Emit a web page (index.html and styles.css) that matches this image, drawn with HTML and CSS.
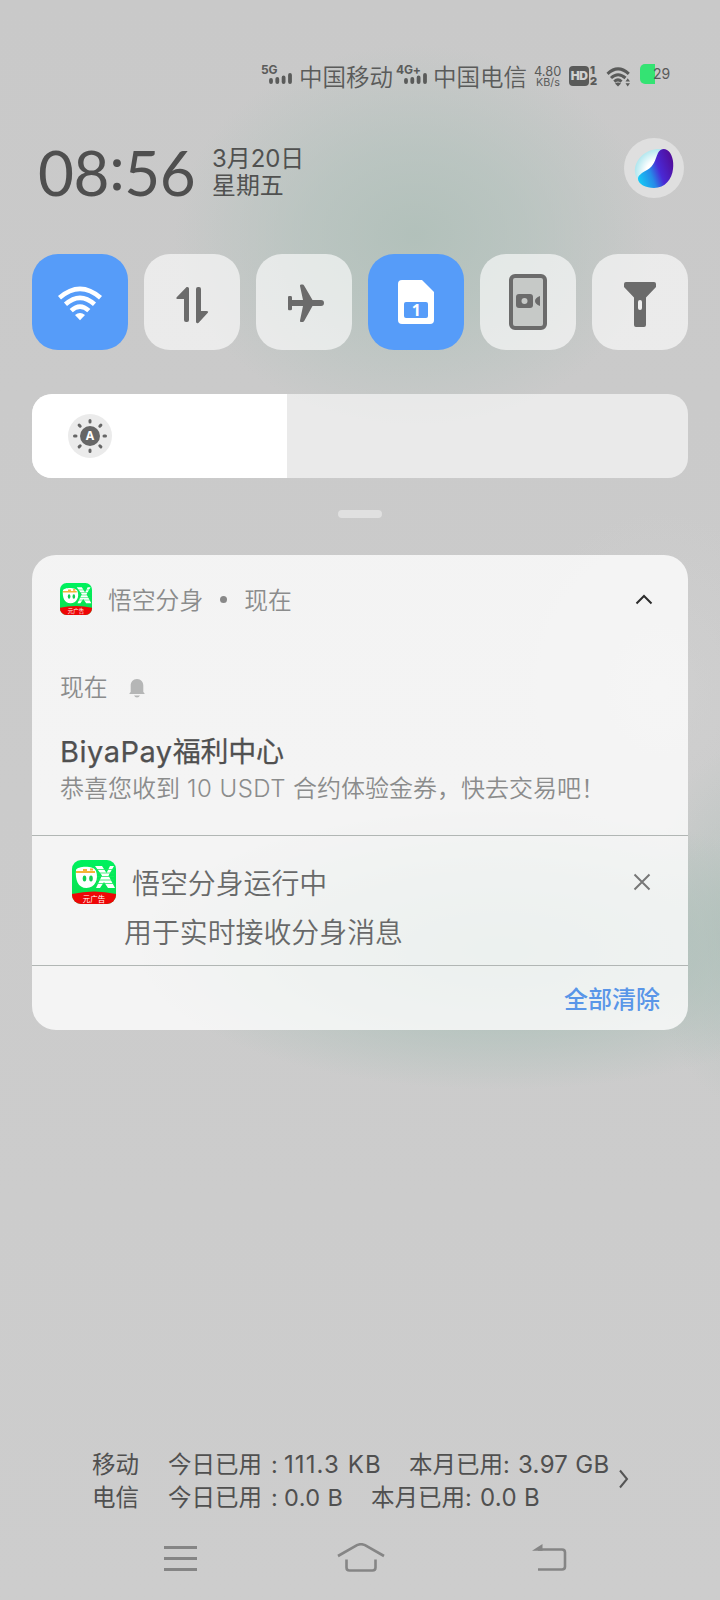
FILE: index.html
```html
<!DOCTYPE html>
<html lang="zh-CN">
<head>
<meta charset="utf-8">
<title>通知中心</title>
<link rel="stylesheet" href="styles.css">
</head>
<body>
<svg class="defs" width="0" height="0">
  <defs>
    <linearGradient id="appg" x1="0" y1="0" x2="0" y2="1"><stop offset="0" stop-color="#00f25e"/><stop offset="1" stop-color="#0bdc4c"/></linearGradient>
    <clipPath id="appclip"><rect width="44" height="44" rx="9"/></clipPath>
    <symbol id="app" viewBox="0 0 44 44">
      <g clip-path="url(#appclip)">
        <rect width="44" height="44" fill="url(#appg)"/>
        <path d="M23 6h7l4.500 7L38 6h4l-5.500 9.500L43 28h-7l-4-6-4 6h-4l6-12.500z" fill="#fff"/>
        <path d="M24 9.500h18M24 13h18M24 16.500h18M24 20h18M24 23.500h18" stroke="#1fe763" stroke-width=".8"/>
        <path d="M4 10c1-4 18-5 20 1 3 8-1 17-9.500 17S3 20 4 10z" fill="#fff"/>
        <path d="M4 12h19M11 10h4M18 9.500h3" stroke="#f5b437" stroke-width="2.200" fill="none"/>
        <ellipse cx="12.500" cy="18.500" rx="1.800" ry="3" fill="#10cf50"/><ellipse cx="19" cy="18.500" rx="1.800" ry="3" fill="#10cf50"/>
        <path d="M0 34q22-5 44 0v10H0z" fill="#ee0606"/>
        <text x="22" y="41.500" text-anchor="middle" class="app-label">元广告</text>
      </g>
    </symbol>
    <symbol id="bars" viewBox="0 0 24 11"><path d="M2 7v2M8.300 6v3M14.600 4.500V9M21 2v7" stroke="#5a5b5a" stroke-width="3.800" stroke-linecap="round"/></symbol>
  </defs>
</svg>
<div class="screen">
  <header class="status">
    <div class="net"><span>5G</span><svg width="24" height="11"><use href="#bars"/></svg></div>
    <div class="carrier">中国移动</div>
    <div class="net"><span>4G+</span><svg width="24" height="11"><use href="#bars"/></svg></div>
    <div class="carrier second">中国电信</div>
    <div class="speed"><span>4.80</span><span class="unit">KB/s</span></div>
    <div class="hd"><b>HD</b></div>
    <div class="sims"><b>1</b><b>2</b></div>
    <svg class="swifi" width="26" height="22" viewBox="0 0 26 22" fill="none" stroke="#5a5b5a" stroke-width="3">
      <path d="M1.500 7.800Q12 -2.200 22.800 7.800M5 12Q12 5.500 19.500 12M8.300 15.600Q12 12.200 15.500 15.600"/><path d="M9 17.500q3-2 6 0l-3 3z" fill="#5a5b5a" stroke="none"/><path d="M19.500 15.500l2.200-3.300 2.300 3.300zM19.500 17.200l2.200 3.300 2.300-3.300z" fill="#5a5b5a" stroke="none"/>
    </svg>
    <div class="battery"></div><span class="pct">29</span>
  </header>

  <section class="clockrow">
    <div class="clock">08<i>:</i>56</div>
    <div class="date"><div>3月20日</div><div>星期五</div></div>
    <div class="assistant">
      <svg width="60" height="60" viewBox="-1 -1 60 60">
        <defs>
          <radialGradient id="orb" cx=".65" cy=".65" r=".7"><stop offset=".45" stop-color="#fff"/><stop offset="1" stop-color="#a5e3ec"/></radialGradient>
          <linearGradient id="bean" x1="0" y1=".75" x2="1" y2=".35"><stop offset="0" stop-color="#16c9f5"/><stop offset=".35" stop-color="#268be8"/><stop offset=".6" stop-color="#4929d5"/><stop offset="1" stop-color="#510e9c"/></linearGradient>
        </defs>
        <path d="M10 33C9 20 22 9 36 10c10 1 9 24 2 32-8 7-27 5-28-9z" fill="url(#orb)"/>
        <path d="M33 14c2-4 6-5 9-3 5 3 7 11 6 19-1 10-8 19-19 19-8 0-16-4-16-9 0-4 4-6 9-9 7-4 8-10 11-17z" fill="url(#bean)"/>
      </svg>
    </div>
  </section>

  <section class="tiles">
    <div class="tile on"><svg width="96" height="96" viewBox="0 0 96 96" fill="none" stroke="#fff" stroke-width="4.600">
      <path d="M27.500 43.800Q48 26 68.500 43.800M33.500 50.300Q48 37.300 62.500 50.300M39.200 56.600Q48 48.600 56.800 56.600"/><path d="M43 61q5-4 10 0l-5 5.300z" fill="#fff" stroke="none"/></svg></div>
    <div class="tile"><svg width="96" height="96" viewBox="0 0 96 96" fill="#6b6b6b">
      <path d="M42.600 33q2.400-.5 2.400 1.500V66q0 2-2 2h-1q-2 0-2-2V45h-6q-2.500 0-1.300-1.800zM52 35q0-2 2-2h1q2 0 2 2v22h5.500q2.500 0 1.300 1.800L54.400 69q-2.400.8-2.400-1.200z"/></svg></div>
    <div class="tile"><svg width="96" height="96" viewBox="0 0 96 96" fill="#6b6b6b">
      <path d="M45 30.500h1.600q1 0 1.600 1.200L56.500 46H65q3 0 3 3t-3 3h-8.500L48.200 67q-.6 1-1.600 1H45q-1.300 0-1-1.500L47 52H36v3q0 1.300-1.500 1.300H33q-1 0-1-1.300V43.400q0-1.300 1-1.300h1.500q1.500 0 1.500 1.300V46h11l-3-14q-.3-1.500 1-1.500z"/></svg></div>
    <div class="tile on sim"><svg width="96" height="96" viewBox="0 0 96 96">
      <path d="M34 26h20l12 12v28q0 4-4 4H34q-4 0-4-4V30q0-4 4-4z" fill="#fff"/><rect x="36" y="48" width="24" height="16" rx="2" fill="#569cf9"/><text x="48.300" y="62" text-anchor="middle" class="simno">1</text></svg></div>
    <div class="tile"><svg width="96" height="96" viewBox="0 0 96 96">
      <rect x="31" y="22" width="34" height="52" rx="4" fill="#c6c9c7" stroke="#6b6b6b" stroke-width="4"/><rect x="36" y="40" width="17" height="14" rx="3" fill="#6b6b6b"/><circle cx="44.500" cy="47" r="3" fill="#c6c9c7"/><path d="M60 42v10q-5-2-5-5t5-5z" fill="#6b6b6b"/></svg></div>
    <div class="tile"><svg width="96" height="96" viewBox="0 0 96 96">
      <path d="M34 28h28q2 0 2 2v3L54 43.500V71q0 2-2 2h-8q-2 0-2-2V43.500L32 33v-3q0-2 2-2z" fill="#6b6b6b"/><rect x="46" y="46" width="4" height="10" rx="2" fill="#f0f0f0"/></svg></div>
  </section>

  <section class="brightness">
    <div class="level">
      <svg width="44" height="44" viewBox="0 0 44 44"><circle cx="22" cy="22" r="22" fill="#ebebeb"/><circle cx="22" cy="22" r="10" fill="#666"/>
        <g stroke="#666" stroke-width="3" stroke-linecap="round"><path d="M22 6.500v1.500M22 36v1.500M6.500 22H8M36 22h1.500M11.100 11.100l1.100 1.100M31.800 31.800l1.100 1.100M11.100 32.900l1.100-1.100M31.800 12.200l1.100-1.100"/></g>
        <text x="22" y="26.300" text-anchor="middle" class="auto">A</text></svg>
    </div>
  </section>
  <div class="handle"></div>

  <main class="card">
    <section class="note">
      <div class="head"><svg width="32" height="32"><use href="#app"/></svg><span class="name">悟空分身</span><span class="dot"></span><span class="now">现在</span>
        <svg class="chev" width="18" height="12" viewBox="0 0 18 12"><path d="M1.500 10.500L9 3 16.500 10.500" fill="none" stroke="#2c2c2c" stroke-width="2"/></svg></div>
      <div class="when"><span>现在</span><svg width="16" height="19" viewBox="0 0 16 19" fill="#b5b6b6"><path d="M8 0c4 0 6.300 3 6.300 6.500V13l1.200 1.200v.8H.5v-.8L1.700 13V6.500C1.700 3 4 0 8 0zM5 16.500h6q-1 2-3 2t-3-2z"/></svg></div>
      <h1>BiyaPay<span>福利中心</span></h1>
      <p>恭喜您收到<span class="amt">10 USDT</span>合约体验金券，快去交易吧！</p>
    </section>
    <section class="service">
      <div class="srow"><svg width="44" height="44"><use href="#app"/></svg><span>悟空分身运行中</span>
        <svg class="close" width="18" height="18" viewBox="0 0 18 18"><path d="M1.500 1.500l15 15M16.500 1.500l-15 15" stroke="#777" stroke-width="2"/></svg></div>
      <div class="desc">用于实时接收分身消息</div>
    </section>
    <section class="clear">全部清除</section>
  </main>

  <footer class="usage">
    <div class="lines">
      <div class="line"><span class="op">移动</span><span class="cjk">今日已用</span><span class="colon">:</span><span class="v1">111.3 KB</span><span class="cjk">本月已用</span><span class="colon c2">:</span><span class="v3">3.97 GB</span></div>
      <div class="line"><span class="op">电信</span><span class="cjk">今日已用</span><span class="colon">:</span><span class="v2">0.0 B</span><span class="cjk">本月已用</span><span class="colon c2">:</span><span class="v3">0.0 B</span></div>
    </div>
    <svg class="more" width="10" height="20" viewBox="0 0 10 20"><path d="M1 1.500L8 10 1 18.500" fill="none" stroke="#555" stroke-width="2"/></svg>
  </footer>
  <nav class="nav">
    <svg width="34" height="32" viewBox="0 0 34 32" stroke="#858585" stroke-width="2.800"><path d="M1 4.500h33M1 15.500h33M1 26.500h33"/></svg>
    <svg class="home" width="48" height="32" viewBox="0 0 48 32" fill="none" stroke="#858585" stroke-width="2.600"><path d="M1 13L20 2.200q4-2 8 0L47 13M9.500 16.500v8q0 3 3 3h23q3 0 3-3v-8"/></svg>
    <svg width="36" height="32" viewBox="0 0 36 32" fill="none" stroke="#858585" stroke-width="2.600"><path d="M6 6.500h24q3 0 3 3v14q0 3-3 3H6"/><path d="M0 7.800L10.500 1v6.800z" fill="#858585" stroke="none"/></svg>
  </nav>
</div>
</body>
</html>
```

FILE: styles.css
```css
* { box-sizing: border-box; margin: 0; padding: 0; }
body { width: 720px; height: 1600px; overflow: hidden; }
svg { display: block; flex: none; }
.defs { position: absolute; }
.screen {
  width: 720px; height: 1600px; display: flex; flex-direction: column;
  font-family: Inter, "Noto Sans CJK SC", sans-serif; font-weight: 300; color: #555;
  background:
    radial-gradient(ellipse 240px 190px at 415px 235px, rgba(174,191,184,.85), rgba(178,194,188,.65) 45%, rgba(203,203,203,0)),
    radial-gradient(ellipse 90px 180px at 740px 925px, rgba(172,190,183,.6), rgba(178,194,188,.4) 45%, rgba(203,203,203,0)),
    radial-gradient(ellipse 360px 140px at 500px 950px, rgba(168,190,181,1), rgba(174,193,186,.75) 50%, rgba(203,203,203,0)),
    radial-gradient(ellipse 150px 180px at 660px 690px, rgba(215,215,215,.4), rgba(203,203,203,0)),
    linear-gradient(#c9c9c9, #cbcbcb 50%, #cdcdcd);
}
.status { height: 104px; padding: 60px 0 0 261px; display: flex; align-items: flex-start; color: #5a5b5a; }
.net { width: 33px; margin-right: 5px; padding-top: 3px; font: 700 12px/14px Inter, sans-serif; letter-spacing: -.2px; }
.net span { display: block; height: 10px; white-space: nowrap; }
.net svg { margin: 0 0 0 8px; }
.carrier { width: 97px; font: 350 23.500px/32px "Noto Sans CJK SC", sans-serif; white-space: nowrap; }
.carrier.second { width: 101px; }
.net + .carrier.second { margin-left: -1px; }
.speed { width: 35px; padding-top: 6px; display: flex; flex-direction: column; font: 400 12.800px/11px Inter, sans-serif; }
.speed .unit { font-size: 10.800px; padding-left: 2px; }
.hd { width: 20px; height: 20px; margin-top: 6px; border-radius: 4px; background: #5a5b5a; color: #d0d1d0; font: 700 12px/20px Inter, sans-serif; text-align: center; display: flex; justify-content: center; letter-spacing: -.5px; }
.sims { width: 17px; padding: 5px 0 0 1px; display: flex; flex-direction: column; font: 600 11px/11px Inter, sans-serif; }
.swifi { margin-top: 6px; }
.battery { width: 15px; height: 20px; margin: 4px 0 0 8px; border-radius: 5px 0 0 5px; background: #34e373; }
.pct { margin-left: -2px; font: 400 14px/27px Inter, sans-serif; }

.clockrow { height: 150px; padding: 34px 36px 0 38px; display: flex; align-items: flex-start; }
.clock { width: 174px; font: 400 62px/68px Lato, sans-serif; letter-spacing: -.4px; color: #4f4f4f; white-space: nowrap; }
.clock i { font-style: normal; position: relative; top: -6px; }
.date { padding-top: 7px; font: 400 23.900px/27px Inter, "Noto Sans CJK SC", sans-serif; color: #505150; }
.assistant { margin-left: auto; width: 60px; height: 60px; border-radius: 50%; background: #dfdfdf; }

.tiles { padding: 0 32px; display: flex; gap: 16px; }
.tile { width: 96px; height: 96px; border-radius: 26px; background: rgba(255,255,255,.62); }
.tile.on { background: #569cf9; }
.simno { font: 700 16px "Noto Sans", sans-serif; fill: #fff; }
.brightness { margin: 44px 32px 0; height: 84px; border-radius: 20px; background: rgba(255,255,255,.6); overflow: hidden; flex: none; }
.level { width: 255px; height: 84px; background: #fff; padding: 20px 36px; }
.auto { font: 700 12px Inter, sans-serif; fill: #fff; }
.handle { width: 44px; height: 8px; border-radius: 4px; background: #e0e0e0; margin: 32px auto 37px; flex: none; }

.card { margin: 0 32px; height: 475px; border-radius: 24px; background: rgba(255,255,255,.78); flex: none; }
.note { height: 281px; border-bottom: 1px solid #b1b6b4; padding: 26px 28px 0; font: 350 23.800px/36px "Noto Sans CJK SC", sans-serif; color: #8b8c8c; }
.head { height: 36px; display: flex; align-items: center; }
.name, .now { margin-top: -1px; }
.name { margin-left: 16px; }
.dot { width: 7px; height: 7px; border-radius: 50%; background: #888; margin: 0 17px; }
.chev { margin: 0 7px 0 auto; }
.when { margin-top: 53px; height: 36px; display: flex; align-items: center; gap: 21px; }
.when span { margin-top: -4px; }
.note h1 { margin-top: 27px; height: 36px; font: 400 29px/38px Inter, "Noto Sans CJK SC", sans-serif; letter-spacing: .5px; color: #505050; -webkit-text-stroke: .25px #505050; }
.note h1 span { font-size: 28px; letter-spacing: -.2px; }
.note p { height: 36px; font-size: 24px; white-space: nowrap; }
.amt { font-family: Inter, sans-serif; margin: 0 7px 0 7px; letter-spacing: .5px; }
.service { height: 130px; border-bottom: 1px solid #b1b6b4; padding: 24px 36px 0 40px; font: 350 27.900px/44px "Noto Sans CJK SC", sans-serif; color: #686969; }
.srow { height: 44px; display: flex; align-items: center; }
.srow span { margin: -1px 0 0 16px; }
.close { margin-left: auto; position: relative; left: -1px; }
.desc { padding-left: 52px; margin-top: 5px; }
.clear { height: 64px; padding-right: 28px; text-align: right; font: 500 24px/63px "Noto Sans CJK SC", sans-serif; color: #5996e8; }
.app-label { font: 400 7.500px "Noto Sans CJK SC", sans-serif; fill: #fff; }

.usage { margin-top: 417px; padding-left: 92px; height: 68px; display: flex; align-items: center; color: #505050; flex: none; }
.lines { width: 527px; }
.line { display: flex; font: 400 23.500px/33px Inter, "Noto Sans CJK SC", sans-serif; white-space: nowrap; }
.op { width: 76px; }
.cjk { width: 95px; }
.colon { width: 21px; padding-left: 8px; }
.colon.c2 { width: 14px; padding-left: 0; }
.line .c2 { margin-left: -1px; margin-right: 1px; }
.v1 { width: 125px; font-size: 24px; letter-spacing: 1.100px; }
.v2 { width: 87px; letter-spacing: .4px; }
.v3 { font-size: 24px; letter-spacing: .3px; }
.more { margin-top: -5px; }
.nav { margin-top: 28px; display: flex; justify-content: space-between; padding: 0 152px 0 163px; flex: none; }
.home { margin-right: 8px; }
```
